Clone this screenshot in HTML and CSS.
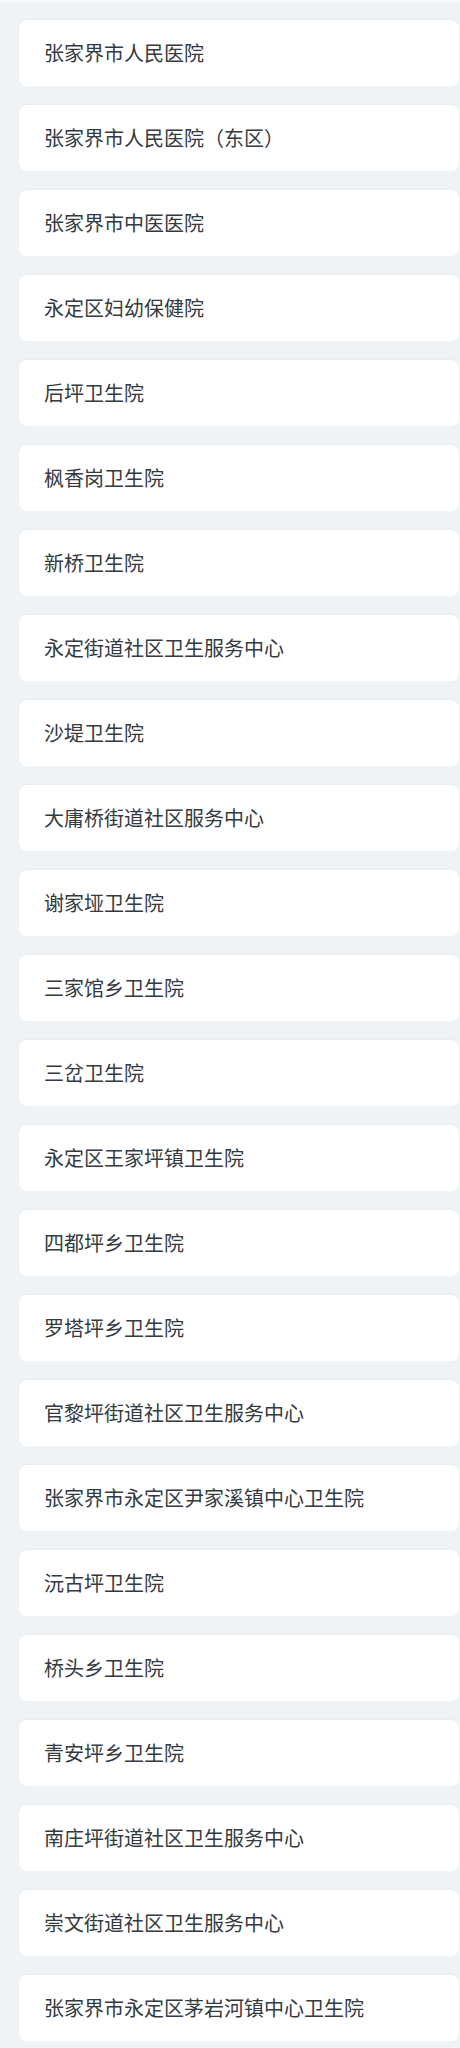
FILE: index.html
```html
<!DOCTYPE html>
<html lang="zh-CN">
<head>
<meta charset="utf-8">
<link rel="stylesheet" href="styles.css">
</head>
<body>
<div class="topbar"></div>
<ul class="list">
<li class="card">张家界市人民医院</li>
<li class="card">张家界市人民医院（东区）</li>
<li class="card">张家界市中医医院</li>
<li class="card">永定区妇幼保健院</li>
<li class="card">后坪卫生院</li>
<li class="card">枫香岗卫生院</li>
<li class="card">新桥卫生院</li>
<li class="card">永定街道社区卫生服务中心</li>
<li class="card">沙堤卫生院</li>
<li class="card">大庸桥街道社区服务中心</li>
<li class="card">谢家垭卫生院</li>
<li class="card">三家馆乡卫生院</li>
<li class="card">三岔卫生院</li>
<li class="card">永定区王家坪镇卫生院</li>
<li class="card">四都坪乡卫生院</li>
<li class="card">罗塔坪乡卫生院</li>
<li class="card">官黎坪街道社区卫生服务中心</li>
<li class="card">张家界市永定区尹家溪镇中心卫生院</li>
<li class="card">沅古坪卫生院</li>
<li class="card">桥头乡卫生院</li>
<li class="card">青安坪乡卫生院</li>
<li class="card">南庄坪街道社区卫生服务中心</li>
<li class="card">崇文街道社区卫生服务中心</li>
<li class="card">张家界市永定区茅岩河镇中心卫生院</li>
</ul>
</body>
</html>
```
FILE: styles.css
```css
html, body {
  margin: 0;
  padding: 0;
  background: #eff3f6;
}
body {
  font-family: "Noto Sans CJK SC", "Noto Sans", sans-serif;
  color: #333a40;
}
.topbar {
  height: 3px;
  background: #f5f8fa;
}
.list {
  list-style: none;
  margin: 0;
  padding: 17px 1px 20px 19px;
  display: flex;
  flex-direction: column;
  gap: 19px;
}
.card {
  height: 66px;
  box-sizing: border-box;
  background: #ffffff;
  border-radius: 8px;
  box-shadow: 0 -1px 2px rgba(0, 0, 0, 0.03);
  padding-left: 25px;
  display: flex;
  align-items: center;
  font-size: 20px;
  line-height: 1;
}
```
